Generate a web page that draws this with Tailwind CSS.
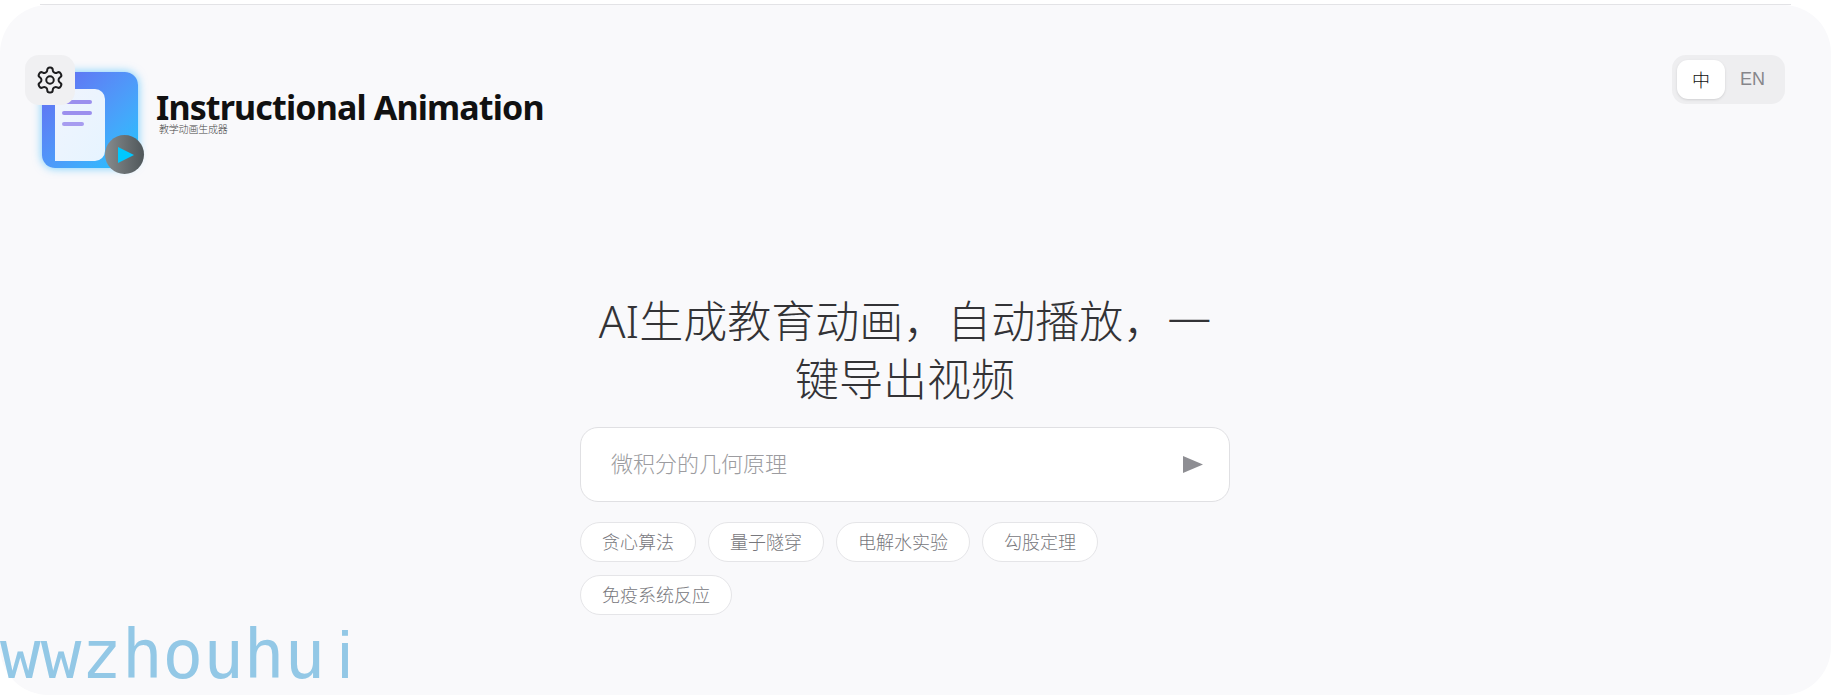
<!DOCTYPE html>
<html lang="zh">
<head>
  <meta charset="UTF-8">
  <title>Instructional Animation</title>
  <script src="https://cdn.jsdelivr.net/npm/@tailwindcss/browser@4"></script>
</head>
<body class="bg-white overflow-hidden font-['Noto_Sans','Noto_Sans_CJK_SC',sans-serif]">
  <div class="relative h-[695px] pt-[4px] overflow-hidden">
    <div class="h-[1px] mx-[40px] bg-[#e3e3e6]"></div>
    <div class="relative h-[690px] bg-[#f9f9fb] rounded-[48px] overflow-hidden">

      <!-- settings -->
      <button class="absolute left-[25px] top-[50px] z-10 w-[50px] h-[50px] rounded-[14px] bg-[#f0f0f2] flex items-center justify-center">
        <svg width="30" height="30" viewBox="0 0 24 24" fill="none" stroke="#1d1d1f" stroke-width="1.6" stroke-linecap="round" stroke-linejoin="round">
          <path d="M12.22 2h-.44a2 2 0 0 0-2 2v.18a2 2 0 0 1-1 1.73l-.43.25a2 2 0 0 1-2 0l-.15-.08a2 2 0 0 0-2.73.73l-.22.38a2 2 0 0 0 .73 2.73l.15.1a2 2 0 0 1 1 1.72v.51a2 2 0 0 1-1 1.74l-.15.09a2 2 0 0 0-.73 2.73l.22.38a2 2 0 0 0 2.73.73l.15-.08a2 2 0 0 1 2 0l.43.25a2 2 0 0 1 1 1.73V20a2 2 0 0 0 2 2h.44a2 2 0 0 0 2-2v-.18a2 2 0 0 1 1-1.73l.43-.25a2 2 0 0 1 2 0l.15.08a2 2 0 0 0 2.73-.73l.22-.39a2 2 0 0 0-.73-2.73l-.15-.08a2 2 0 0 1-1-1.74v-.5a2 2 0 0 1 1-1.74l.15-.09a2 2 0 0 0 .73-2.73l-.22-.38a2 2 0 0 0-2.73-.73l-.15.08a2 2 0 0 1-2 0l-.43-.25a2 2 0 0 1-1-1.73V4a2 2 0 0 0-2-2z"/>
          <circle cx="12" cy="12" r="3"/>
        </svg>
      </button>

      <!-- language toggle -->
      <div class="absolute right-[46px] top-[50px] w-[113px] h-[49px] rounded-[14px] bg-[#eeeef0] p-[5px] flex">
        <div class="w-[48px] h-[39px] rounded-[11px] bg-white shadow-sm flex items-center justify-center text-[18px] font-light text-[#111111] font-['Noto_Sans_CJK_SC',sans-serif]">中</div>
        <div class="flex-1 flex items-center justify-center text-[18px] text-[#86868b] font-['Liberation_Sans',sans-serif]">EN</div>
      </div>

      <!-- brand -->
      <header class="flex items-start pl-[42px] pt-[67px]">
        <div class="relative w-[96px] h-[96px] rounded-[13px] bg-gradient-to-br from-[#6366f1] to-[#00c6ff] shadow-[0_0_10px_rgba(0,170,255,0.55)] shrink-0">
          <div class="absolute left-[13px] top-[17px] w-[50px] h-[72px] rounded-r-[10px] bg-gradient-to-br from-[#f0f4fd] to-[#e6f4ff] flex flex-col gap-[7px] pl-[7px] pt-[11px]">
            <div class="w-[30px] h-[4px] rounded-full bg-[#9b8fee]"></div>
            <div class="w-[30px] h-[4px] rounded-full bg-[#9b8fee]"></div>
            <div class="w-[22px] h-[4px] rounded-full bg-[#a79cf0]"></div>
          </div>
          <div class="absolute left-[63px] top-[63px] w-[39px] h-[39px] rounded-full bg-gradient-to-r from-[#878c8e] to-[#50575a] flex items-center justify-center">
            <svg width="16" height="16" viewBox="0 0 16 16" class="ml-[3px]"><path d="M0 0 L16 8 L0 16 Z" fill="#00c8ff"/></svg>
          </div>
        </div>
        <div class="ml-[18px] mt-[16px]">
          <div class="text-[34px] leading-[38px] font-bold tracking-[-0.85px] text-[#111111]">Instructional Animation</div>
          <div class="ml-[3px] text-[10px] leading-[10px] -mt-[2px] tracking-[-0.2px] font-light text-[#444444]">教学动画生成器</div>
        </div>
      </header>

      <!-- hero -->
      <main class="w-[650px] ml-[580px] mt-[124px]">
        <h1 class="text-[44px] leading-[58px] font-light text-center text-[#333336]">AI生成教育动画，自动播放，一键导出视频</h1>
        <div class="mt-[19px] h-[75px] bg-white border border-[#e0e0e3] rounded-[18px] flex items-center justify-between pl-[30px] pr-[26px]">
          <span class="text-[22px] text-[#9c9ca0] font-light -mt-[2px]">微积分的几何原理</span>
          <svg width="20" height="17" viewBox="0 0 20 17"><path d="M0 0 L20 8.5 L0 17 Z" fill="#8e8e93"/></svg>
        </div>
        <div class="mt-[20px] flex flex-wrap gap-x-[12px] gap-y-[13px]">
          <span class="h-[40px] px-[21px] rounded-full bg-white border border-[#e5e5e8] flex items-center text-[18px] font-light text-[#77777c]">贪心算法</span>
          <span class="h-[40px] px-[21px] rounded-full bg-white border border-[#e5e5e8] flex items-center text-[18px] font-light text-[#77777c]">量子隧穿</span>
          <span class="h-[40px] px-[21px] rounded-full bg-white border border-[#e5e5e8] flex items-center text-[18px] font-light text-[#77777c]">电解水实验</span>
          <span class="h-[40px] px-[21px] rounded-full bg-white border border-[#e5e5e8] flex items-center text-[18px] font-light text-[#77777c]">勾股定理</span>
          <span class="h-[40px] px-[21px] rounded-full bg-white border border-[#e5e5e8] flex items-center text-[18px] font-light text-[#77777c]">免疫系统反应</span>
        </div>
      </main>
    </div>

    <!-- watermark -->
    <div class="absolute left-0 top-[615px] h-[80px] text-[67.5px] leading-[80px] text-[#93c8e6] whitespace-nowrap font-['DejaVu_Sans_Mono',monospace]">wwzhouhu<span class="inline-block w-[40px] text-center font-['Liberation_Sans',sans-serif]">i</span></div>
  </div>
</body>
</html>
